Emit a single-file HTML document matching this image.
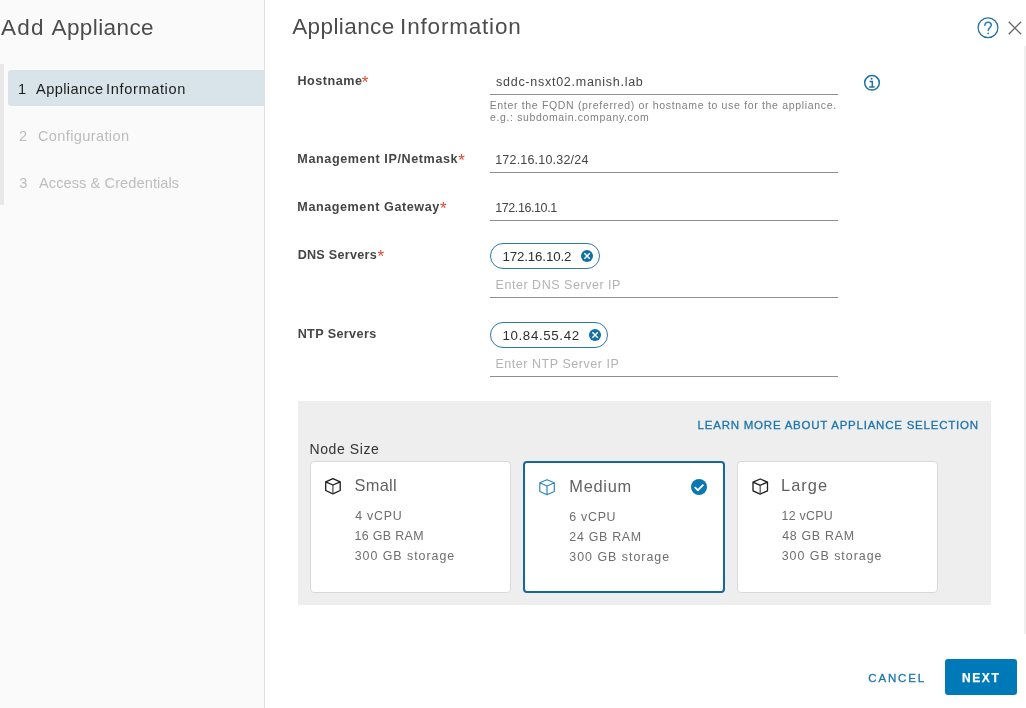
<!DOCTYPE html>
<html><head><meta charset="utf-8">
<style>
*{box-sizing:border-box;margin:0;padding:0}
html,body{width:1026px;height:708px;overflow:hidden;background:#fff;font-family:"Liberation Sans",sans-serif;color:#333}
div,svg{position:absolute}
.t{white-space:nowrap}
.a{color:#e0482c;font-size:17px;line-height:17px;white-space:nowrap}
.u{left:490px;width:348px;height:1px;background:#8f8f8f}
.pill{left:490px;height:26px;border:1px solid #2d77a6;border-radius:13px;background:#fff}
.card{top:461px;width:201px;height:132px;background:#fff;border:1px solid #d9d9d9;border-radius:4px}
#w{left:0;top:0;width:1026px;height:708px;will-change:transform}
</style></head><body>
<div id="w">
<!-- sidebar -->
<div style="left:0;top:0;width:264px;height:708px;background:#fafafa"></div>
<div style="left:264px;top:0;width:1px;height:708px;background:#dedede"></div>
<div style="left:0;top:64px;width:3.8px;height:140.5px;background:#e9e7e7"></div>
<div style="left:8px;top:70px;width:256px;height:36px;background:#d9e4ea;border-radius:3px 0 0 3px"></div>
<!-- right strip -->
<div style="left:1024px;top:46px;width:2px;height:588px;background:#efefef"></div>
<!-- underlines -->
<div class="u" style="top:94px"></div>
<div class="u" style="top:172px"></div>
<div class="u" style="top:220px"></div>
<div class="u" style="top:297px"></div>
<div class="u" style="top:376px"></div>
<!-- pills -->
<div class="pill" style="top:243px;width:110px"></div>
<div class="pill" style="top:322px;width:118px"></div>
<!-- panel -->
<div style="left:298px;top:401px;width:692.5px;height:203.5px;background:#eeeeee"></div>
<div class="card" style="left:310px"></div>
<div class="card" style="left:523px;width:202px;border:2px solid #14689a"></div>
<div class="card" style="left:737px;width:201px"></div>
<!-- next button -->
<div style="left:945px;top:659px;width:72px;height:36px;background:#0079b8;border-radius:3px"></div>
<!-- asterisks -->
<div class="a" style="left:361.8px;top:73.6px">*</div>
<div class="a" style="left:458.2px;top:151.6px">*</div>
<div class="a" style="left:440px;top:199.6px">*</div>
<div class="a" style="left:377.6px;top:247.6px">*</div>
<svg width="1026" height="708" viewBox="0 0 1026 708" style="left:0;top:0" fill="none">
<!-- help -->
<circle cx="988" cy="27.8" r="9.9" stroke="#26739f" stroke-width="1.3"/>
<path d="M984.9 25.3c0-1.9 1.3-3.1 3.2-3.1s3.200 1.100 3.200 2.900c0 2.600-3.100 2.600-3.100 5.400" stroke="#2a80b5" stroke-width="1.500" stroke-linecap="round"/>
<circle cx="988.2" cy="33.400" r="0.900" fill="#2a80b5"/>
<!-- close -->
<path d="M1008.700 21.800l12.400 12.400M1021.100 21.800l-12.400 12.400" stroke="#666" stroke-width="1.300"/>
<!-- info -->
<circle cx="872" cy="82.800" r="7.300" stroke="#23729e" stroke-width="1.500"/>
<circle cx="871.600" cy="78.700" r="1.050" fill="#23729e"/>
<path d="M869.600 81.400h2.700v5.300M869.100 87h5.500" stroke="#23729e" stroke-width="1.500"/>
<!-- pill close -->
<circle cx="587" cy="256" r="6" fill="#0f71a6"/>
<path d="M584.400 253.300l5.400 5.400M589.800 253.300l-5.400 5.400" stroke="#fff" stroke-width="1.500"/>
<circle cx="595" cy="335" r="6" fill="#0f71a6"/>
<path d="M592.400 332.300l5.400 5.400M597.800 332.300l-5.400 5.400" stroke="#fff" stroke-width="1.500"/>
<!-- cubes -->
<g stroke="#1c1c1c" stroke-width="1.300" stroke-linejoin="round">
<path id="cb" d="M332.900 478.700l7.300 3.100v8.700l-7.300 3.300l-7.200-3.300v-8.700zM325.700 481.800l7.200 3.200l7.300-3.200"/>
<path d="M332.900 485v8.800" stroke="#555"/>
</g>
<g stroke="#3185bd" stroke-width="1.200" stroke-linejoin="round" transform="translate(214.100 1)">
<path d="M332.900 478.700l7.300 3.100v8.700l-7.300 3.300l-7.200-3.300v-8.700zM325.700 481.800l7.200 3.200l7.300-3.200M332.900 485v8.800"/>
</g>
<g stroke="#1c1c1c" stroke-width="1.300" stroke-linejoin="round" transform="translate(427.300 0.300)">
<path d="M332.900 478.700l7.300 3.100v8.700l-7.300 3.300l-7.200-3.300v-8.700zM325.700 481.800l7.200 3.200l7.300-3.200"/>
<path d="M332.900 485v8.800" stroke="#555"/>
</g>
<!-- check -->
<circle cx="699" cy="487" r="8" fill="#0a76b2"/>
<path d="M694.700 487.200l3.200 3l5.500-5.600" stroke="#fff" stroke-width="1.800"/>
</svg>

<div class="t" style="left:0.95px;top:14.00px;font-size:22.5px;line-height:27px;color:#4c4c4c;letter-spacing:1.332px">Add <span style="position:absolute;left:50.62px;top:0;letter-spacing:0.398px">Appliance</span></div>
<div class="t" style="left:17.88px;top:80.00px;font-size:14.6px;line-height:18px;color:#1c1c1c;letter-spacing:0.000px">1</div>
<div class="t" style="left:36.12px;top:80.00px;font-size:14.6px;line-height:18px;color:#1c1c1c;letter-spacing:0.373px">Appliance <span style="position:absolute;left:69.96px;top:0;letter-spacing:0.625px">Information</span></div>
<div class="t" style="left:18.88px;top:127.00px;font-size:14.6px;line-height:18px;color:#bdbdbd;letter-spacing:0.000px">2</div>
<div class="t" style="left:37.93px;top:127.00px;font-size:14.6px;line-height:18px;color:#bdbdbd;letter-spacing:0.360px">Configuration</div>
<div class="t" style="left:19.36px;top:174.00px;font-size:14.6px;line-height:18px;color:#bdbdbd;letter-spacing:0.000px">3</div>
<div class="t" style="left:38.97px;top:174.00px;font-size:14.6px;line-height:18px;color:#bdbdbd;letter-spacing:0.078px">Access &amp; Credentials</div>
<div class="t" style="left:292.19px;top:13.00px;font-size:22.5px;line-height:27px;color:#4c4c4c;letter-spacing:0.408px">Appliance <span style="position:absolute;left:107.93px;top:0;letter-spacing:0.810px">Information</span></div>
<div class="t" style="left:297.53px;top:74.00px;font-size:12.6px;line-height:15px;color:#454545;letter-spacing:0.512px;font-weight:700">Hostname</div>
<div class="t" style="left:297.34px;top:152.00px;font-size:12.6px;line-height:15px;color:#454545;letter-spacing:0.595px;font-weight:700">Management IP/Netmask</div>
<div class="t" style="left:297.34px;top:200.00px;font-size:12.6px;line-height:15px;color:#454545;letter-spacing:0.565px;font-weight:700">Management Gateway</div>
<div class="t" style="left:297.64px;top:248.00px;font-size:12.6px;line-height:15px;color:#454545;letter-spacing:0.276px;font-weight:700">DNS Servers</div>
<div class="t" style="left:297.64px;top:327.00px;font-size:12.6px;line-height:15px;color:#454545;letter-spacing:0.390px;font-weight:700">NTP Servers</div>
<div class="t" style="left:496.02px;top:75.00px;font-size:12.5px;line-height:15px;color:#454545;letter-spacing:0.737px">sddc-nsxt02.manish.lab</div>
<div class="t" style="left:495.18px;top:153.00px;font-size:12.5px;line-height:15px;color:#454545;letter-spacing:0.201px">172.16.10.32/24</div>
<div class="t" style="left:495.18px;top:201.00px;font-size:12.5px;line-height:15px;color:#454545;letter-spacing:-0.404px">172.16.10.1</div>
<div class="t" style="left:489.63px;top:99.00px;font-size:10.5px;line-height:13px;color:#7f7f7f;letter-spacing:0.674px">Enter the FQDN (preferred) or hostname to use for the appliance.</div>
<div class="t" style="left:490.03px;top:111.00px;font-size:10.5px;line-height:13px;color:#7f7f7f;letter-spacing:0.631px">e.g.: subdomain.company.com</div>
<div class="t" style="left:502.57px;top:249.00px;font-size:13.3px;line-height:16px;color:#2e2e2e;letter-spacing:-0.148px">172.16.10.2</div>
<div class="t" style="left:495.55px;top:278.00px;font-size:12.5px;line-height:15px;color:#b3b3b3;letter-spacing:0.532px">Enter DNS Server IP</div>
<div class="t" style="left:502.46px;top:328.00px;font-size:13.3px;line-height:16px;color:#2e2e2e;letter-spacing:0.637px">10.84.55.42</div>
<div class="t" style="left:495.40px;top:357.00px;font-size:12.5px;line-height:15px;color:#b3b3b3;letter-spacing:0.544px">Enter NTP Server IP</div>
<div class="t" style="left:697.61px;top:418.00px;font-size:11.5px;line-height:14px;color:#1a76ad;letter-spacing:0.768px;-webkit-text-stroke:0.3px #1a76ad">LEARN MORE ABOUT APPLIANCE SELECTION</div>
<div class="t" style="left:309.42px;top:441.00px;font-size:14px;line-height:17px;color:#333;letter-spacing:0.610px">Node Size</div>
<div class="t" style="left:354.40px;top:475.00px;font-size:16.4px;line-height:20px;color:#626262;letter-spacing:0.335px">Small</div>
<div class="t" style="left:355.16px;top:509.00px;font-size:12.4px;line-height:15px;color:#6e6e6e;letter-spacing:0.754px">4 vCPU</div>
<div class="t" style="left:354.46px;top:529.00px;font-size:12.4px;line-height:15px;color:#6e6e6e;letter-spacing:0.378px">16 GB RAM</div>
<div class="t" style="left:354.63px;top:549.00px;font-size:12.4px;line-height:15px;color:#6e6e6e;letter-spacing:0.986px">300 GB storage</div>
<div class="t" style="left:569.30px;top:476.00px;font-size:16.4px;line-height:20px;color:#626262;letter-spacing:0.709px">Medium</div>
<div class="t" style="left:569.37px;top:510.00px;font-size:12.4px;line-height:15px;color:#6e6e6e;letter-spacing:0.700px">6 vCPU</div>
<div class="t" style="left:569.32px;top:530.00px;font-size:12.4px;line-height:15px;color:#6e6e6e;letter-spacing:0.711px">24 GB RAM</div>
<div class="t" style="left:569.27px;top:550.00px;font-size:12.4px;line-height:15px;color:#6e6e6e;letter-spacing:1.003px">300 GB storage</div>
<div class="t" style="left:781.04px;top:475.00px;font-size:16.4px;line-height:20px;color:#626262;letter-spacing:1.031px">Large</div>
<div class="t" style="left:781.46px;top:509.00px;font-size:12.4px;line-height:15px;color:#6e6e6e;letter-spacing:0.296px">12 vCPU</div>
<div class="t" style="left:782.16px;top:529.00px;font-size:12.4px;line-height:15px;color:#6e6e6e;letter-spacing:0.713px">48 GB RAM</div>
<div class="t" style="left:781.63px;top:549.00px;font-size:12.4px;line-height:15px;color:#6e6e6e;letter-spacing:1.006px">300 GB storage</div>
<div class="t" style="left:868.35px;top:671.00px;font-size:11.5px;line-height:14px;color:#1a76ad;letter-spacing:1.831px;-webkit-text-stroke:0.3px #1a76ad">CANCEL</div>
<div class="t" style="left:961.91px;top:671.00px;font-size:12px;line-height:14px;color:#ffffff;letter-spacing:1.614px;font-weight:700;-webkit-text-stroke:0.25px #ffffff">NEXT</div>
</div>
</body></html>
